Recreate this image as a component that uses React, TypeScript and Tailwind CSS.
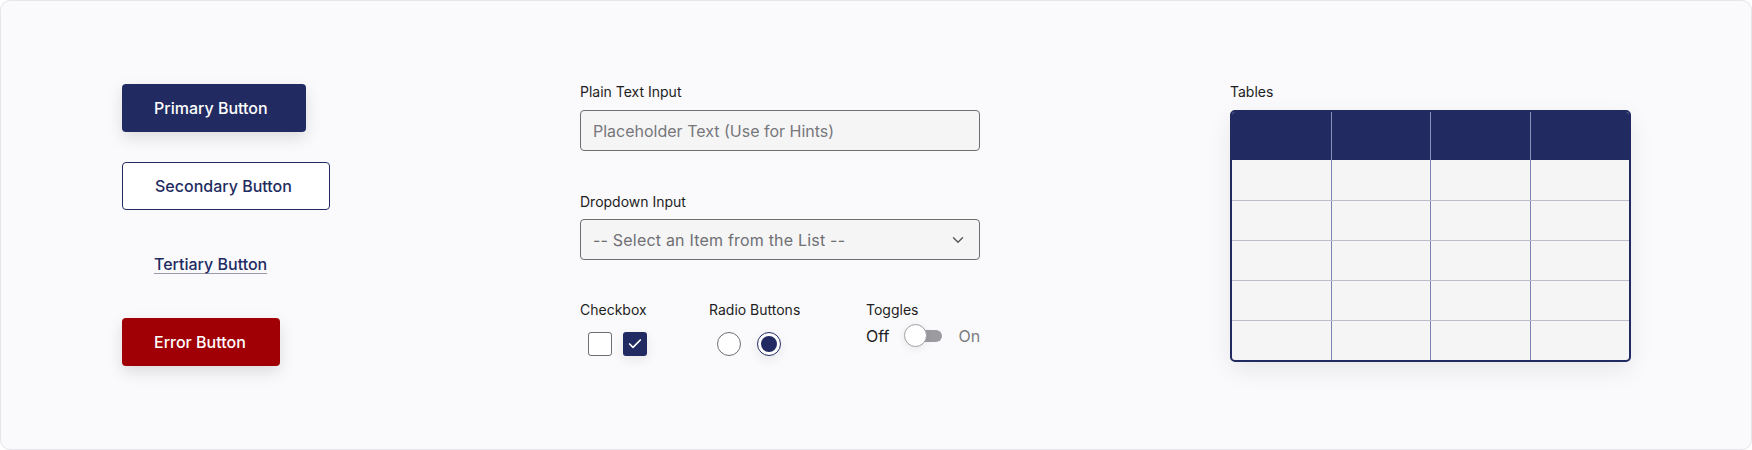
import React from 'react';
import { ChevronDown, Check } from 'lucide-react';

const font = { fontFamily: '"Inter", "Noto Sans", sans-serif' };

const Buttons: React.FC = () => (
  <div className="flex flex-col items-start gap-[30px] w-[458px] shrink-0">
    <button className="h-[48px] w-[184px] rounded-[4px] bg-[#222b61] pl-8 text-left text-[16px] font-medium text-white shadow-[0_6px_16px_rgba(0,0,0,0.12)]">
      Primary Button
    </button>
    <button className="h-[48px] w-[208px] rounded-[4px] border border-[#222b61] bg-white pl-8 text-left text-[16px] font-medium text-[#222b61]">
      Secondary Button
    </button>
    <div className="flex h-[48px] items-center pl-8">
      <span className="text-[16px] font-medium text-[#222b61] underline decoration-[#9a9aa8] underline-offset-[3px]">
        Tertiary Button
      </span>
    </div>
    <button className="h-[48px] w-[158px] rounded-[4px] bg-[#a00005] pl-8 text-left text-[16px] font-medium text-white shadow-[0_6px_16px_rgba(0,0,0,0.12)]">
      Error Button
    </button>
  </div>
);

const Label: React.FC<{ children: React.ReactNode }> = ({ children }) => (
  <div className="h-[20px] text-[14px] leading-[20px] text-[#1d1d22]">{children}</div>
);

const Inputs: React.FC = () => (
  <div className="-mt-[2px] flex w-[650px] shrink-0 flex-col">
    <Label>Plain Text Input</Label>
    <div className="mt-[8px] flex h-[41px] w-[400px] items-center rounded-[4px] border border-[#6e6e6e] bg-[#f5f5f5] px-3 text-[16px] text-[#77777c]">
      Placeholder Text (Use for Hints)
    </div>

    <div className="mt-[41px]">
      <Label>Dropdown Input</Label>
    </div>
    <div className="mt-[7px] flex h-[41px] w-[400px] items-center justify-between rounded-[4px] border border-[#6e6e6e] bg-[#f5f5f5] pl-3 pr-[12px] text-[16px] tracking-[0.2px] text-[#6f6f74]">
      <span>-- Select an Item from the List --</span>
      <ChevronDown className="h-[18px] w-[18px] text-[#55555a]" strokeWidth={1.8} />
    </div>

    <div className="mt-[40px] flex">
      <div className="w-[129px]">
        <Label>Checkbox</Label>
        <div className="mt-[12px] flex gap-[11px] pl-[8px]">
          <div className="h-[24px] w-[24px] rounded-[3px] border border-[#6e6e6e] bg-white" />
          <div className="flex h-[24px] w-[24px] items-center justify-center rounded-[3px] bg-[#222b61] shadow-[0_4px_12px_rgba(0,0,0,0.08)]">
            <Check className="h-[16px] w-[16px] text-white" strokeWidth={2.5} />
          </div>
        </div>
      </div>
      <div className="w-[157px]">
        <Label>Radio Buttons</Label>
        <div className="mt-[12px] flex gap-[16px] pl-[8px]">
          <div className="h-[24px] w-[24px] rounded-full border border-[#6e6e6e] bg-white" />
          <div className="flex h-[24px] w-[24px] items-center justify-center rounded-full border-[1.5px] border-[#222b61] bg-white shadow-[0_4px_12px_rgba(0,0,0,0.08)]">
            <div className="h-[16px] w-[16px] rounded-full bg-[#222b61]" />
          </div>
        </div>
      </div>
      <div>
        <Label>Toggles</Label>
        <div className="mt-[4px] flex items-center">
          <span className="text-[16px] text-[#1d1d22]">Off</span>
          <div className="relative ml-[15px] h-[24px] w-[40px]">
            <div className="absolute left-[10px] top-[6px] h-[12px] w-[28px] rounded-full bg-[#9c9ca0]" />
            <div className="absolute left-0 top-0 h-[23px] w-[23px] rounded-full border border-[#a0a0a4] bg-white shadow-[0_2px_8px_rgba(0,0,0,0.08)]" />
          </div>
          <span className="ml-[14px] text-[16px] text-[#7a7a7e]">On</span>
        </div>
      </div>
    </div>
  </div>
);

const Table: React.FC = () => {
  const rows = [0, 1, 2, 3, 4];
  const cols = [0, 1, 2, 3];
  return (
    <div className="-mt-[2px] flex flex-col">
      <Label>Tables</Label>
      <div className="mt-[8px] w-[401px] overflow-hidden rounded-[5px] border-2 border-[#222b61] bg-[#f5f5f5] shadow-[0_8px_24px_rgba(0,0,0,0.08)]">
        <div className="flex h-[48px] bg-[#222b61]">
          {cols.map((c) => (
            <div key={c} className={`h-full flex-1 ${c > 0 ? 'border-l border-[#8a8fb5]' : ''}`} />
          ))}
        </div>
        {rows.map((r) => (
          <div key={r} className={`flex h-[40px] ${r > 0 ? 'border-t-[1.5px] border-[#bcbccb]' : ''}`}>
            {cols.map((c) => (
              <div key={c} className={`h-full flex-1 ${c > 0 ? 'border-l border-[#7d82b0]' : ''}`} />
            ))}
          </div>
        ))}
      </div>
    </div>
  );
};

export default function App() {
  return (
    <div className="h-[450px] w-[1752px] bg-white" style={font}>
      <div className="flex h-full w-full rounded-[10px] border border-[#e6e6ea] bg-[#fafafc] pl-[121px] pt-[83px]">
        <Buttons />
        <Inputs />
        <Table />
      </div>
    </div>
  );
}
